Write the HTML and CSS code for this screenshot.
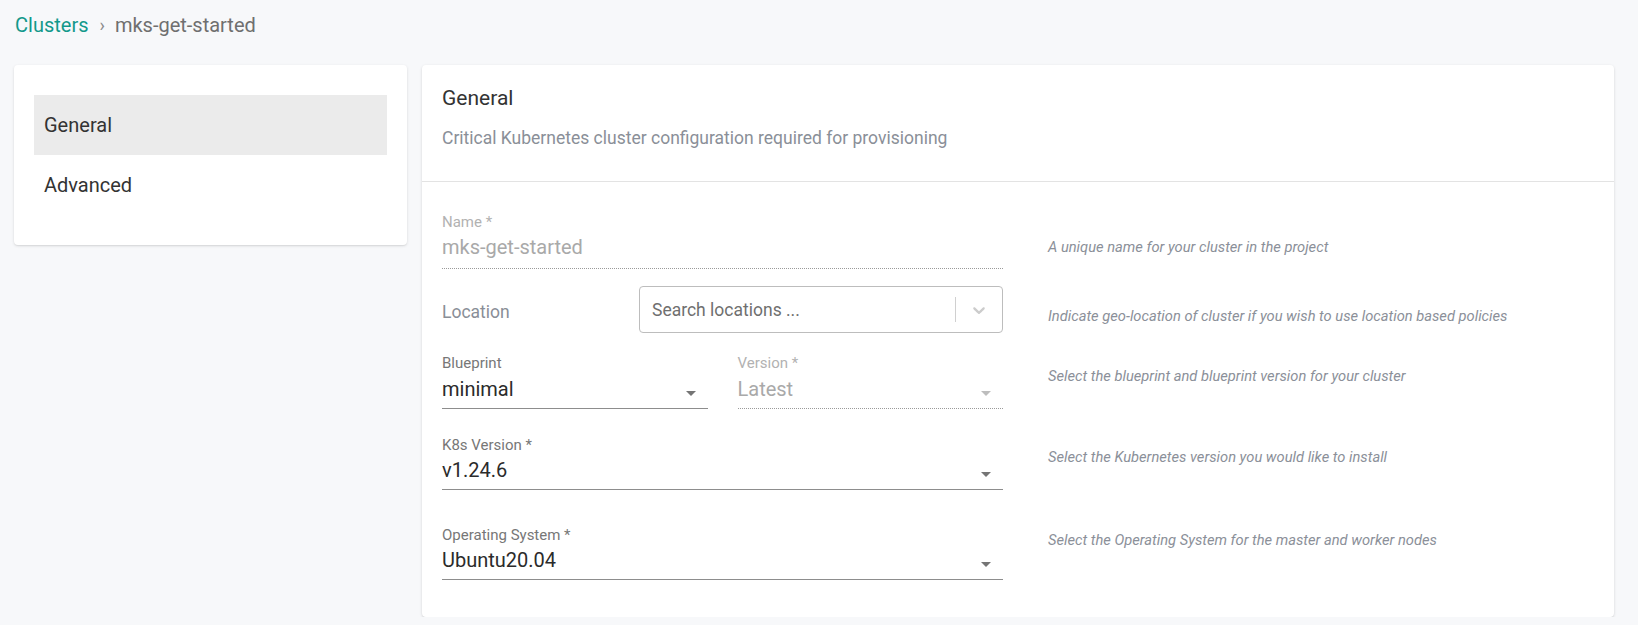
FILE: index.html
```html
<!DOCTYPE html>
<html lang="en">
<head>
<meta charset="utf-8">
<title>mks-get-started</title>
<link rel="stylesheet" href="styles.css">
</head>
<body>
<div class="page">
  <nav class="breadcrumb">
    <a class="crumb-link" href="#">Clusters</a>
    <span class="crumb-sep">›</span>
    <span class="crumb-current">mks-get-started</span>
  </nav>

  <div class="layout">
    <aside class="side-card">
      <div class="side-item active">General</div>
      <div class="side-item">Advanced</div>
    </aside>

    <section class="main-card">
      <header class="card-header">
        <h2 class="card-title">General</h2>
        <p class="card-subtitle">Critical Kubernetes cluster configuration required for provisioning</p>
      </header>

      <div class="form">
        <div class="form-row row-name">
          <div class="field disabled">
            <label class="field-label">Name *</label>
            <div class="field-input">mks-get-started</div>
          </div>
          <p class="help">A unique name for your cluster in the project</p>
        </div>

        <div class="form-row row-location">
          <div class="loc-field">
            <span class="loc-label">Location</span>
            <div class="loc-box">
              <span class="loc-placeholder">Search locations ...</span>
              <span class="loc-sep"></span>
              <span class="loc-chevron">
                <svg width="20" height="20" viewBox="0 0 20 20"><path d="M4.516 7.548c0.436-0.446 1.043-0.481 1.576 0l3.908 3.747 3.908-3.747c0.533-0.481 1.141-0.446 1.574 0 0.436 0.445 0.408 1.197 0 1.615-0.406 0.418-4.695 4.502-4.695 4.502-0.217 0.223-0.502 0.335-0.787 0.335s-0.57-0.112-0.789-0.335c0 0-4.287-4.084-4.695-4.502s-0.436-1.17 0-1.615z"/></svg>
              </span>
            </div>
          </div>
          <p class="help">Indicate geo-location of cluster if you wish to use location based policies</p>
        </div>

        <div class="form-row row-blueprint">
          <div class="field-pair">
            <div class="field">
              <label class="field-label">Blueprint</label>
              <div class="field-input">minimal
                <svg class="field-arrow" width="24" height="24" viewBox="0 0 24 24"><path d="M7 10l5 5 5-5z"/></svg>
              </div>
            </div>
            <div class="field disabled">
              <label class="field-label">Version *</label>
              <div class="field-input">Latest
                <svg class="field-arrow" width="24" height="24" viewBox="0 0 24 24"><path d="M7 10l5 5 5-5z"/></svg>
              </div>
            </div>
          </div>
          <p class="help">Select the blueprint and blueprint version for your cluster</p>
        </div>

        <div class="form-row row-k8s">
          <div class="field">
            <label class="field-label">K8s Version *</label>
            <div class="field-input">v1.24.6
              <svg class="field-arrow" width="24" height="24" viewBox="0 0 24 24"><path d="M7 10l5 5 5-5z"/></svg>
            </div>
          </div>
          <p class="help">Select the Kubernetes version you would like to install</p>
        </div>

        <div class="form-row row-os">
          <div class="field">
            <label class="field-label">Operating System *</label>
            <div class="field-input">Ubuntu20.04
              <svg class="field-arrow" width="24" height="24" viewBox="0 0 24 24"><path d="M7 10l5 5 5-5z"/></svg>
            </div>
          </div>
          <p class="help">Select the Operating System for the master and worker nodes</p>
        </div>
      </div>
    </section>
  </div>
</div>
</body>
</html>
```

FILE: styles.css
```css
* { box-sizing: border-box; }

body {
  margin: 0;
  background: #f7f8fa;
  font-family: Roboto, "Liberation Sans", Arial, sans-serif;
  color: #333;
}

.page {
  padding: 13px 24px 0 14px;
}

/* Breadcrumb */
.breadcrumb {
  display: flex;
  align-items: center;
  padding-left: 1px;
  font-size: 20px;
  line-height: 24px;
}
.crumb-link {
  color: #13998b;
  text-decoration: none;
}
.crumb-sep {
  margin: 0 10px 0 11px;
  color: #8a8a8a;
  font-size: 18px;
}
.crumb-current {
  color: #6f6f6f;
}

/* Layout */
.layout {
  display: flex;
  align-items: flex-start;
  gap: 15px;
  margin-top: 28px;
}

.side-card {
  width: 393px;
  flex: none;
  padding: 30px 20px;
  background: #fff;
  border-radius: 4px;
  box-shadow: 0 1px 3px rgba(0, 0, 0, 0.12), 0 1px 1px rgba(0, 0, 0, 0.04);
}
.side-item {
  height: 60px;
  display: flex;
  align-items: center;
  padding-left: 10px;
  font-size: 20px;
  color: #333;
}
.side-item.active {
  background: #ebebeb;
}

.main-card {
  flex: 1;
  background: #fff;
  border-radius: 4px;
  box-shadow: 0 1px 3px rgba(0, 0, 0, 0.14), 0 1px 1px rgba(0, 0, 0, 0.04);
  padding-bottom: 37px;
}

.card-header {
  padding: 21px 20px 31px;
  border-bottom: 1px solid #e3e3e3;
}
.card-title {
  margin: 0;
  font-size: 21px;
  line-height: 24px;
  font-weight: 400;
  color: #333;
}
.card-subtitle {
  margin: 16px 0 0;
  font-size: 17.5px;
  line-height: 24px;
  color: #8a8f98;
}

/* Form */
.form {
  padding: 31px 20px 0;
}
.form-row {
  display: grid;
  grid-template-columns: 561px 1fr;
  column-gap: 45px;
  align-items: start;
}
.row-location { margin-top: 17px; }
.row-blueprint { margin-top: 21px; }
.row-k8s { margin-top: 27px; }
.row-os { margin-top: 36px; }

.help {
  margin: 0;
  font-size: 14.7px;
  line-height: 20px;
  font-style: italic;
  color: #8b9099;
}
.row-name .help { padding-top: 24px; }
.row-location .help { padding-top: 20px; }
.row-blueprint .help { padding-top: 12px; }
.row-k8s .help { padding-top: 11px; }
.row-os .help { padding-top: 4px; }

.field-label {
  display: block;
  font-size: 15px;
  line-height: 18px;
  margin-bottom: 4px;
  color: #777;
}
.field-input {
  position: relative;
  font-size: 20px;
  line-height: 24px;
  padding-bottom: 7px;
  border-bottom: 1px solid #8d8d8d;
  color: #2b2b2b;
}
.row-name .field-input { padding-bottom: 9px; }
.row-blueprint .field-label { margin-bottom: 5px; }

.field-arrow {
  position: absolute;
  right: 5px;
  top: 4px;
  fill: #757575;
}
.field.disabled .field-label { color: #b2b2b2; }
.field.disabled .field-input {
  color: #a9a9a9;
  border-bottom: 1px dotted #9a9a9a;
}
.field.disabled .field-arrow { fill: #bdbdbd; }

.field-pair {
  display: grid;
  grid-template-columns: 1fr 1fr;
  column-gap: 30px;
}

/* Location select */
.loc-field {
  display: flex;
  align-items: center;
}
.loc-label {
  width: 197px;
  flex: none;
  font-size: 17.5px;
  color: #898e97;
  padding-top: 4px;
}
.loc-box {
  flex: 1;
  height: 47px;
  display: flex;
  align-items: center;
  padding-left: 12px;
  border: 1px solid #bdbdbd;
  border-radius: 4px;
}
.loc-placeholder {
  flex: 1;
  font-size: 17.5px;
  color: #6f6f6f;
}
.loc-sep {
  width: 1px;
  height: 25px;
  background: #d0d0d0;
}
.loc-chevron {
  width: 46px;
  display: flex;
  justify-content: center;
  fill: #cccccc;
}
.loc-chevron svg { display: block; }
```
